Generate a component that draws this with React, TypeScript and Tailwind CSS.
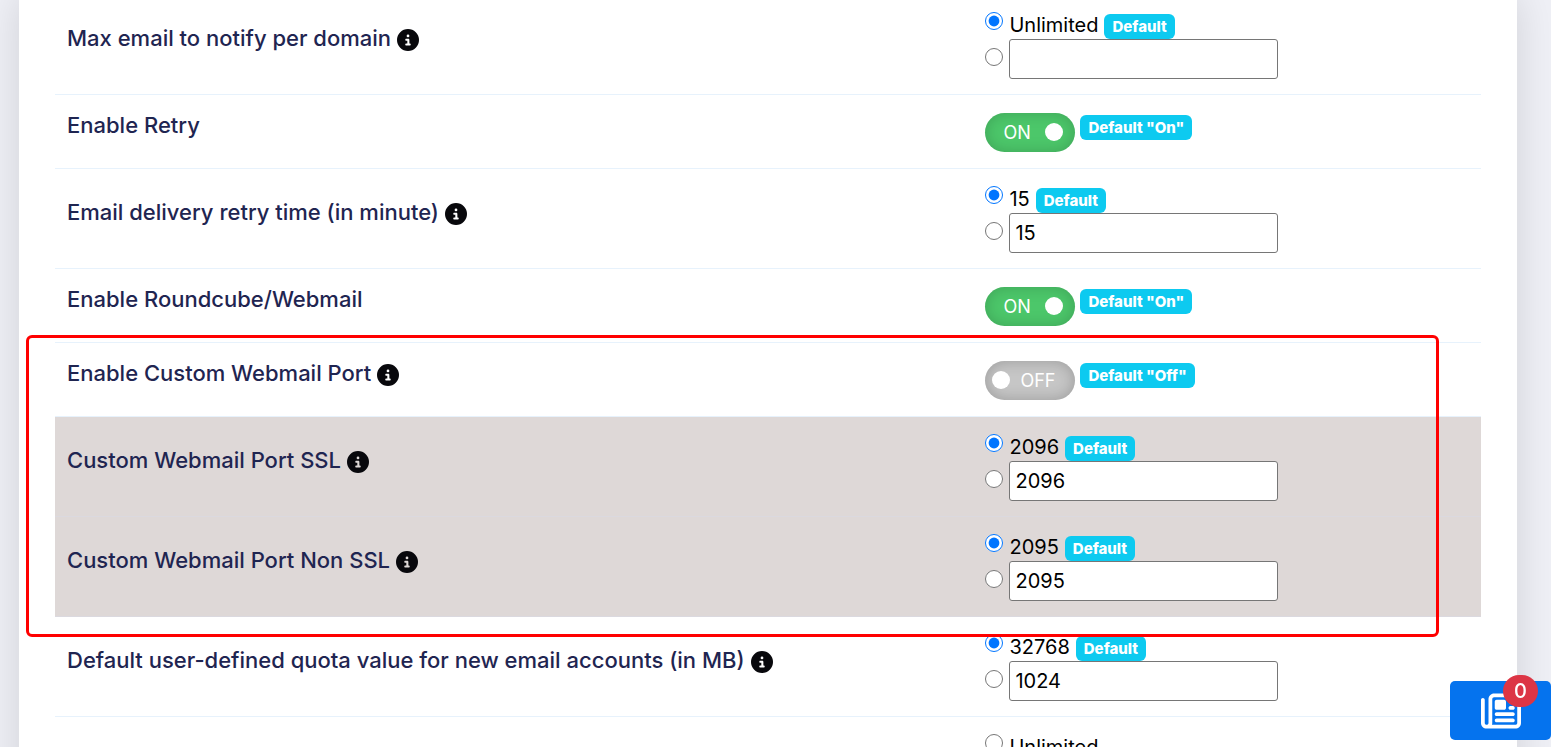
import { useState } from "react";
import type { ReactNode } from "react";
import { FaCircleInfo, FaRegNewspaper } from "react-icons/fa6";

function DefaultBadge({ children }: { children: ReactNode }) {
  return (
    <span className="flex h-[25px] items-center rounded-md bg-[#0dcaf0] px-2 text-[15px] font-extrabold leading-none text-white">
      {children}
    </span>
  );
}

function Row({
  label,
  info = false,
  muted = false,
  children,
}: {
  label: string;
  info?: boolean;
  muted?: boolean;
  children: ReactNode;
}) {
  return (
    <div
      className={
        muted
          ? "grid grid-cols-[38fr_21fr] border-b border-[#dbd9df] bg-[#ded8d7]"
          : "grid grid-cols-[38fr_21fr] border-b border-[#e7f2fc]"
      }
    >
      <div className="flex items-center gap-1.5 px-3 pb-3 text-[22px] font-medium text-[#1f2551]">
        <span>{label}</span>
        {info && <FaCircleInfo className="mt-0.5 size-[22px] text-[#08080c]" />}
      </div>
      <div className="px-3">{children}</div>
    </div>
  );
}

function RadioSetting({
  name,
  label,
  option,
  value = "",
  muted = false,
  custom = false,
}: {
  name: string;
  label: string;
  option: string;
  value?: string;
  muted?: boolean;
  custom?: boolean;
}) {
  return (
    <Row label={label} info muted={muted}>
      <div className="pb-[15px] pt-4 text-xl text-black">
        <div className="flex h-7 items-start gap-1.5">
          <label className="flex items-start gap-1.5">
            <input
              type="radio"
              name={name}
              defaultChecked={!custom}
              className="mt-px size-[18px] accent-[#0075ff]"
            />
            <span className="leading-7">{option}</span>
          </label>
          {!custom && (
            <div className="self-end">
              <DefaultBadge>Default</DefaultBadge>
            </div>
          )}
        </div>
        <div className="flex items-start gap-1.5">
          <input
            type="radio"
            name={name}
            defaultChecked={custom}
            aria-label={`${label}: custom value`}
            className="mt-[9px] size-[18px] accent-[#0075ff]"
          />
          <input
            type="text"
            defaultValue={value}
            aria-label={label}
            className="h-10 w-[269px] rounded-[3px] border border-[#767676] bg-white px-[5px]"
          />
        </div>
      </div>
    </Row>
  );
}

function ToggleSetting({
  label,
  initial,
  info = false,
}: {
  label: string;
  initial: boolean;
  info?: boolean;
}) {
  const [on, setOn] = useState(initial);

  return (
    <Row label={label} info={info}>
      <div className="flex items-start gap-[5px] pb-4 pt-[18px]">
        <button
          type="button"
          role="switch"
          aria-checked={on}
          aria-label={label}
          onClick={() => setOn(!on)}
          className={
            on
              ? "flex h-[39px] w-[90px] items-center justify-between rounded-full bg-[#4cc76a] pl-[18px] pr-3 text-lg text-white shadow-[inset_0_0_15px_rgba(0,0,0,0.18)]"
              : "flex h-[39px] w-[90px] flex-row-reverse items-center justify-between rounded-full bg-[#c6c6c6] pl-[7px] pr-5 text-lg text-white shadow-[inset_0_0_15px_rgba(0,0,0,0.22)]"
          }
        >
          <span>{on ? "ON" : "OFF"}</span>
          <span className="mb-0.5 size-[18px] rounded-full bg-white" />
        </button>
        <div className="pt-0.5">
          <DefaultBadge>{initial ? 'Default "On"' : 'Default "Off"'}</DefaultBadge>
        </div>
      </div>
    </Row>
  );
}

export default function App() {
  return (
    <div className="h-screen overflow-hidden bg-white pr-0.5 font-['Inter','Open_Sans',sans-serif]">
      <div className="h-full overflow-hidden bg-[#eff0f6] pl-[19px] pr-[34px]">
        <main className="-mt-[5px] bg-white px-9 shadow-[0_0_40px_rgba(0,0,0,0.13)]">
          <RadioSetting
            name="max-notify"
            label="Max email to notify per domain"
            option="Unlimited"
          />
          <ToggleSetting label="Enable Retry" initial={true} />
          <RadioSetting
            name="retry-time"
            label="Email delivery retry time (in minute)"
            option="15"
            value="15"
          />
          <ToggleSetting label="Enable Roundcube/Webmail" initial={true} />

          {/* custom port settings, outlined in red */}
          <div className="relative">
            <ToggleSetting label="Enable Custom Webmail Port" initial={false} info />
            <RadioSetting
              name="port-ssl"
              label="Custom Webmail Port SSL"
              option="2096"
              value="2096"
              muted
            />
            <RadioSetting
              name="port-non-ssl"
              label="Custom Webmail Port Non SSL"
              option="2095"
              value="2095"
              muted
            />
            <div className="pointer-events-none absolute -bottom-5 -left-[29px] -top-2 right-[42px] z-10 rounded-md border-3 border-[#ff0000]" />
          </div>

          <RadioSetting
            name="quota"
            label="Default user-defined quota value for new email accounts (in MB)"
            option="32768"
            value="1024"
          />
          <RadioSetting
            name="max-quota"
            label="Default quota value for new email accounts (in MB)"
            option="Unlimited"
            custom
          />
        </main>
      </div>

      <button
        type="button"
        aria-label="News, 0 unread"
        className="fixed bottom-[7px] right-0.5 z-20 flex h-[59px] w-[101px] items-center justify-center rounded-[5px] bg-[#0573ee] text-white"
      >
        <FaRegNewspaper className="size-10" />
        <span className="absolute -top-1.5 right-[13px] flex h-8 w-[35px] items-center justify-center rounded-full bg-[#dc3545] text-xl font-medium">
          0
        </span>
      </button>
    </div>
  );
}
